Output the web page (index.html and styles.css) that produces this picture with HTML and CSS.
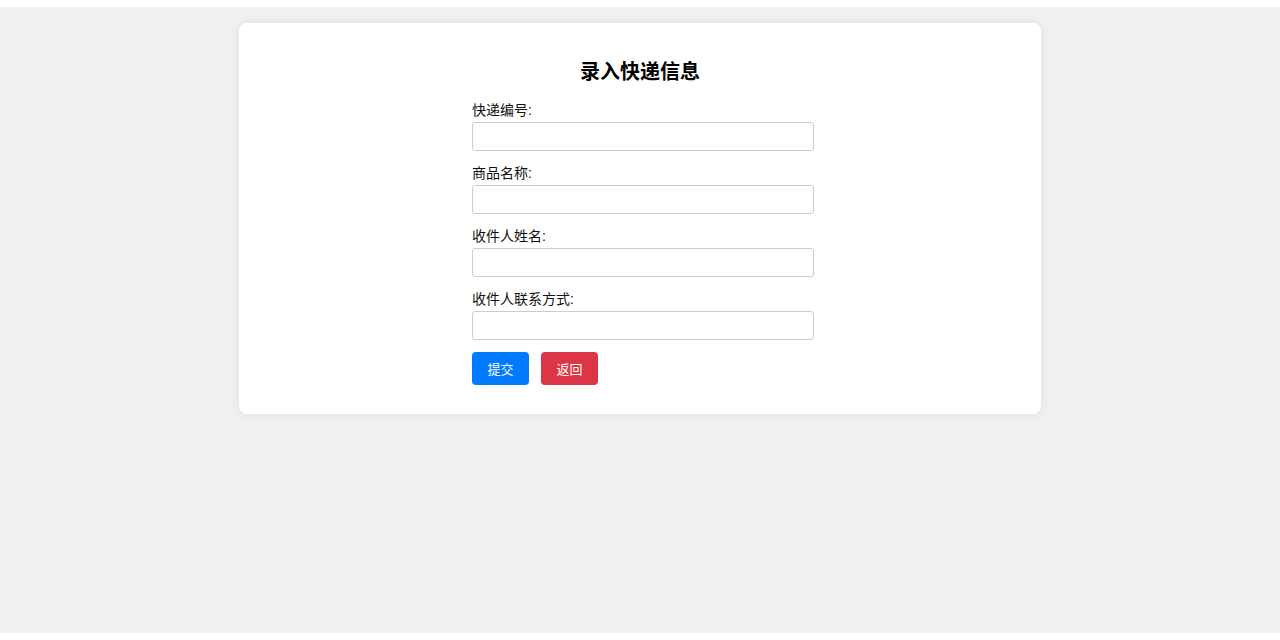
FILE: index.html
```html
<!DOCTYPE html>
<html lang="zh-CN">
<head>
<meta charset="utf-8">
<title>录入快递信息</title>
<link rel="stylesheet" href="styles.css">
</head>
<body>
<div class="page">
  <div class="card">
    <h2 class="title">录入快递信息</h2>
    <form class="form">
      <div class="field">
        <label class="label">快递编号:</label>
        <input class="input" type="text">
      </div>
      <div class="field">
        <label class="label">商品名称:</label>
        <input class="input" type="text">
      </div>
      <div class="field">
        <label class="label">收件人姓名:</label>
        <input class="input" type="text">
      </div>
      <div class="field field-last">
        <label class="label">收件人联系方式:</label>
        <input class="input" type="text">
      </div>
      <div class="actions">
        <button type="button" class="btn btn-primary">提交</button>
        <button type="button" class="btn btn-danger">返回</button>
      </div>
    </form>
  </div>
</div>
</body>
</html>
```

FILE: styles.css
```css
html {
  background: #ffffff;
}
body {
  margin: 0;
  padding: 7px 0;
  font-family: "Liberation Sans", "Noto Sans CJK SC", sans-serif;
  color: #111;
}
.page {
  height: 626px;
  background: #f0f0f0;
  padding-top: 16px;
  box-sizing: border-box;
  border-radius: 4px;
}
.card {
  width: 802px;
  margin: 0 auto;
  background: #ffffff;
  border-radius: 8px;
  box-shadow: 0 0 8px rgba(0, 0, 0, 0.08);
  padding: 35px 0 29px;
  box-sizing: border-box;
}
.title {
  margin: 0;
  text-align: center;
  font-size: 20px;
  line-height: 28px;
  font-weight: bold;
  color: #000;
}
.form {
  width: 342px;
  margin: 15px 0 0 233px;
}
.field {
  display: flex;
  flex-direction: column;
  margin-bottom: 13px;
}
.label {
  font-size: 14px;
  line-height: 18px;
  margin-bottom: 3px;
  color: #111;
}
.input {
  box-sizing: border-box;
  width: 342px;
  height: 29px;
  border: 1px solid #cccccc;
  border-radius: 3px;
  padding: 4px 8px;
  font-size: 14px;
  margin: 0;
  background: #fff;
}
.field-last {
  margin-bottom: 12px;
}
.actions {
  display: flex;
  gap: 12px;
}
.btn {
  width: 57px;
  height: 33px;
  border: none;
  border-radius: 4px;
  color: #fff;
  font-size: 13px;
  font-family: "Noto Sans CJK SC", sans-serif;
  padding: 0;
  cursor: pointer;
}
.btn-primary {
  background: #007bff;
}
.btn-danger {
  background: #dc3545;
}
```
